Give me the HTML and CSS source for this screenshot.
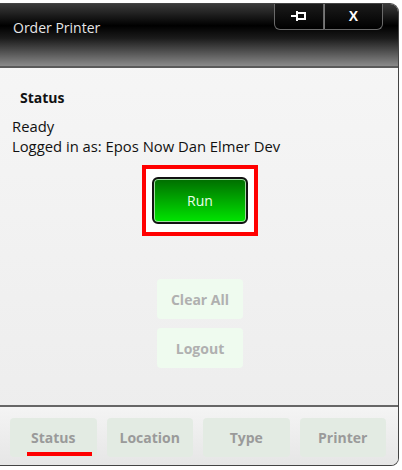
FILE: index.html
```html
<!DOCTYPE html>
<html lang="en">
<head>
    <meta charset="UTF-8">
    <title>Order Printer</title>
    <link rel="stylesheet" href="styles.css">
</head>
<body>
    <div class="window">
        <div class="titlebar">
            <div class="title">Order Printer</div>
            <div class="caption-buttons">
                <button class="cap-btn pin-btn">
                    <svg width="18" height="12" viewBox="0 0 18 12">
                        <path d="M1 6 H7 M7 1 V11 M7 3 H15 V9 H7" stroke="#fff" stroke-width="2" fill="none"/>
                    </svg>
                </button>
                <button class="cap-btn close-btn">X</button>
            </div>
        </div>

        <div class="content">
            <h2 class="section-title">Status</h2>
            <p class="status-line">Ready</p>
            <p class="status-line">Logged in as: Epos Now Dan Elmer Dev</p>

            <div class="run-wrap">
                <div class="highlight">
                    <button class="run-btn">Run</button>
                </div>
            </div>

            <div class="actions">
                <button class="pale-btn">Clear All</button>
                <button class="pale-btn">Logout</button>
            </div>
        </div>

        <div class="tabs">
            <button class="tab active">Status</button>
            <button class="tab">Location</button>
            <button class="tab">Type</button>
            <button class="tab">Printer</button>
        </div>
    </div>
</body>
</html>
```

FILE: styles.css
```css
body {
    margin: 0;
    background-color: #fff;
    font-family: "Open Sans", "Noto Sans", sans-serif;
}
.window {
    margin: 3px 3px 0 0;
    height: 463px;
    box-sizing: border-box;
    border: 1px solid #444;
    border-left: none;
    border-radius: 0 9px 8px 0;
    overflow: hidden;
    display: flex;
    flex-direction: column;
    background: linear-gradient(#f7f7f7, #ececec);
}
.titlebar {
    height: 62px;
    display: flex;
    justify-content: space-between;
    align-items: flex-start;
    background: linear-gradient(#3a3a3a 0%, #000 35%, #1a1a1a 55%, #8a8a8a 100%);
    border-bottom: 2px solid #5a5a5a;
    flex-shrink: 0;
}
.title {
    color: #e6e6e6;
    font-size: 14px;
    margin: 14px 0 0 13px;
}
.caption-buttons {
    display: flex;
    margin-right: 15px;
    margin-top: -1px;
}
.cap-btn {
    height: 27px;
    border: 1px solid #6a6a6a;
    border-top: none;
    background: linear-gradient(#1c1c1c, #000);
    color: #fff;
    font-family: "Liberation Sans", sans-serif;
    font-weight: bold;
    font-size: 14px;
    padding: 0;
    display: flex;
    align-items: center;
    justify-content: center;
}
.pin-btn {
    width: 50px;
    border-radius: 0 0 0 6px;
}
.close-btn {
    width: 59px;
    border-left: 1px solid #777;
    border-radius: 0 0 6px 0;
}
.content {
    flex: 1;
    padding: 0 0 0 12px;
    border-bottom: 2px solid #666;
}
.section-title {
    font-size: 14px;
    font-weight: bold;
    margin: 20px 0 9px 8px;
    color: #111;
}
.status-line {
    margin: 0;
    font-size: 14.8px;
    line-height: 20px;
    color: #111;
}
.run-wrap {
    display: flex;
    justify-content: center;
    margin-top: 9px;
    padding-right: 10px;
}
.highlight {
    width: 108px;
    height: 63px;
    border: 4px solid #f00;
    display: flex;
    align-items: center;
    justify-content: center;
    background: #fff;
}
.run-btn {
    width: 96px;
    height: 47px;
    border: 2px solid #111;
    border-radius: 6px;
    box-shadow: inset 0 0 0 1px #9fdc9f;
    background: linear-gradient(#006d00, #00e600);
    color: #e8ffe8;
    font-family: "Open Sans", sans-serif;
    font-size: 14px;
}
.actions {
    display: flex;
    flex-direction: column;
    align-items: center;
    gap: 9px;
    margin-top: 43px;
    padding-right: 10px;
}
.pale-btn {
    width: 86px;
    height: 40px;
    border: none;
    border-radius: 4px;
    background: #effbef;
    color: #b0b0b0;
    font-family: "Open Sans", sans-serif;
    font-weight: bold;
    font-size: 14px;
}
.tabs {
    height: 58px;
    display: flex;
    gap: 10px;
    padding: 11px 12px 0 10px;
    box-sizing: border-box;
    background: linear-gradient(#f4f4f4, #e6e6e6);
    flex-shrink: 0;
}
.tab {
    flex: 1;
    height: 39px;
    border: none;
    border-radius: 4px;
    background: #e3ebe3;
    color: #9a9a9a;
    font-family: "Open Sans", sans-serif;
    font-weight: bold;
    font-size: 14px;
    position: relative;
}
.tab.active::after {
    content: "";
    position: absolute;
    left: 17px;
    right: 5px;
    bottom: 1px;
    height: 4px;
    background: #f00;
}
```
